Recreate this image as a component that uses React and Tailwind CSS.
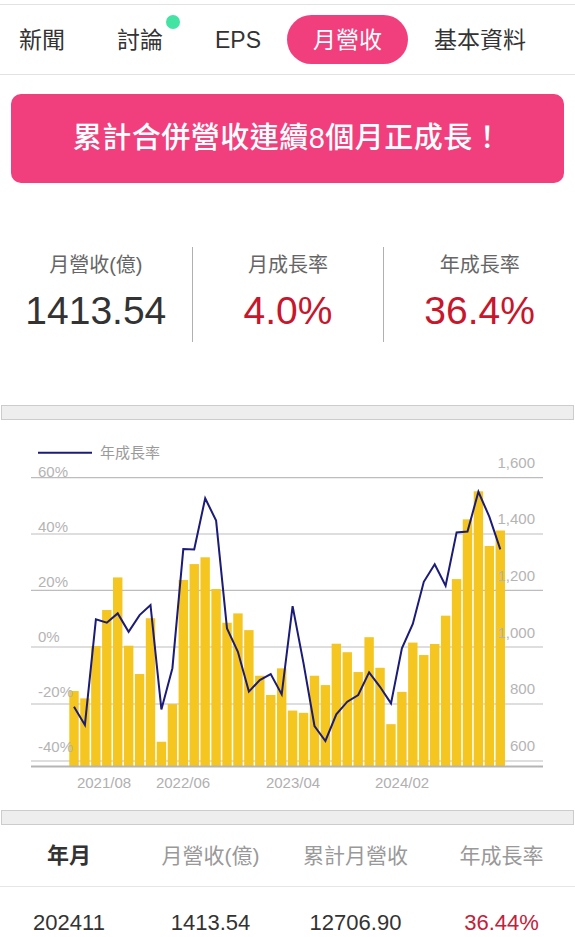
import React from 'react';

const revenue = [
  847, 821, 1006, 1133, 1248, 1007, 907, 1104, 668, 801,
  1239, 1295, 1319, 1207, 1088, 1121, 1062, 901, 833, 927,
  778, 770, 901, 868, 1014, 984, 914, 1037, 929, 730,
  844, 1018, 974, 1013, 1113, 1242, 1453, 1552, 1359, 1413.54,
];

const yoy = [
  -21.2, -27.6, 9.8, 8.6, 11.9, 5.4, 11.3, 14.9, -22.1, -7.5,
  34.7, 34.6, 52.7, 44.8, 6.6, -1.7, -15.8, -11.7, -9.6, -16.8,
  14.5, -5.7, -28.0, -33.3, -23.9, -19.4, -17.0, -9.0, -14.1, -20.0,
  -0.5, 8.2, 23.1, 29.3, 21.7, 40.6, 40.9, 55.0, 46.2, 34.6,
];

const BAR_X0 = 69.3;
const PITCH = 10.93;
const BAR_W = 9.4;
const AXIS_Y = 766.5;

const revY = (v) => 761 - (v - 600) * 0.2833;
const yoyY = (p) => 647 - p * 2.8217;

const gridYs = [477.7, 534, 590.3, 647, 704, 761];
const leftLabels = ['60%', '40%', '20%', '0%', '-20%', '-40%'];
const rightLabels = ['1,600', '1,400', '1,200', '1,000', '800', '600'];
const xLabels = [
  { x: 104, t: '2021/08' },
  { x: 183, t: '2022/06' },
  { x: 293, t: '2023/04' },
  { x: 402, t: '2024/02' },
];

const tabs = ['新聞', '討論', 'EPS', '月營收', '基本資料'];

function RevenueChart() {
  const linePts = yoy
    .map((p, i) => `${(BAR_X0 + i * PITCH + BAR_W / 2).toFixed(1)},${yoyY(p).toFixed(1)}`)
    .join(' ');

  return (
    <svg width="575" height="390" viewBox="0 420 575 390" className="block">
      {/* legend */}
      <line x1="38" y1="452.7" x2="92" y2="452.7" stroke="#1b1b78" strokeWidth="2" />
      <text x="100" y="457.8" fontSize="15" fill="#9a9a9a">年成長率</text>

      {gridYs.map((y) => (
        <line key={y} x1="31" y1={y} x2="543" y2={y} stroke="#bdbdbd" strokeWidth="1.2" />
      ))}

      {revenue.map((v, i) => {
        const top = revY(v);
        return (
          <rect
            key={i}
            x={BAR_X0 + i * PITCH}
            y={top}
            width={BAR_W}
            height={AXIS_Y - top}
            fill="#f5c520"
          />
        );
      })}

      <line x1="31" y1={AXIS_Y} x2="543" y2={AXIS_Y} stroke="#b5b5b5" strokeWidth="2" />

      <polyline points={linePts} fill="none" stroke="#1b1b78" strokeWidth="2" strokeLinejoin="miter" />

      {leftLabels.map((t, i) => (
        <text key={t} x="38" y={477 + i * 55} fontSize="15" fill="#b4b4b4">{t}</text>
      ))}
      {rightLabels.map((t, i) => (
        <text key={t} x="535" y={467.6 + i * 56.7} fontSize="15" fill="#b4b4b4" textAnchor="end">{t}</text>
      ))}
      {xLabels.map((l) => (
        <text key={l.t} x={l.x} y="788" fontSize="15" fill="#b0b0b0" textAnchor="middle">{l.t}</text>
      ))}
    </svg>
  );
}

function ScrollStrip() {
  return <div className="mx-[1px] h-[15px] border border-[#cccccc] bg-[#eeeeee]" />;
}

export default function App() {
  return (
    <div className="w-[575px] min-h-[937px] bg-white overflow-hidden [font-family:'Liberation_Sans','Noto_Sans_CJK_TC',sans-serif]">
      {/* tab bar */}
      <div className="mt-[4px] h-[71px] border-y border-[#e2e2e2] flex items-center">
        <div className="flex items-center -ml-[7px]">
          {tabs.map((t) => (
            <div
              key={t}
              className={
                t === '月營收'
                  ? 'h-[49px] px-[26px] flex items-center rounded-full bg-[#f13f7d] text-white text-[23px]'
                  : 'h-[49px] px-[26px] flex items-center text-[#333333] text-[23px]'
              }
            >
              <span className="relative leading-[30px]">
                {t}
                {t === '討論' && (
                  <span className="absolute -right-[17px] -top-[10px] w-[14px] h-[14px] rounded-full bg-[#42e3a3]" />
                )}
              </span>
            </div>
          ))}
        </div>
      </div>

      {/* banner */}
      <div className="mx-[11px] mt-[19px] h-[89px] rounded-[10px] bg-[#f13f7d] flex items-center justify-center">
        <span className="text-white text-[29px] font-medium tracking-[0.5px]">累計合併營收連續8個月正成長！</span>
      </div>

      {/* stats */}
      <div className="mt-[64px] grid grid-cols-3">
        <div className="h-[95px] flex flex-col items-center">
          <span className="mt-[6px] text-[20px] leading-[24px] text-[#666666]">月營收(億)</span>
          <span className="mt-[12px] text-[39px] leading-[44px] text-[#333333]">1413.54</span>
        </div>
        <div className="h-[95px] flex flex-col items-center border-l border-[#b0b0b0]">
          <span className="mt-[6px] text-[20px] leading-[24px] text-[#666666]">月成長率</span>
          <span className="mt-[12px] text-[39px] leading-[44px] text-[#c8162c]">4.0%</span>
        </div>
        <div className="h-[95px] flex flex-col items-center border-l border-[#b0b0b0]">
          <span className="mt-[6px] text-[20px] leading-[24px] text-[#666666]">年成長率</span>
          <span className="mt-[12px] text-[39px] leading-[44px] text-[#c8162c]">36.4%</span>
        </div>
      </div>

      <div className="mt-[63px]">
        <ScrollStrip />
      </div>

      <RevenueChart />

      <ScrollStrip />

      {/* table */}
      <div className="grid grid-cols-[138px_145px_145px_147px] h-[62px] items-center border-b border-[#e6e6e6] text-[21px]">
        <span className="text-center font-bold text-[#333333] text-[22px]">年月</span>
        <span className="text-center text-[#999999]">月營收(億)</span>
        <span className="text-center text-[#999999]">累計月營收</span>
        <span className="text-center text-[#999999]">年成長率</span>
      </div>
      <div className="grid grid-cols-[138px_145px_145px_147px] h-[70px] items-center text-[22px]">
        <span className="text-center text-[#333333]">202411</span>
        <span className="text-center text-[#333333]">1413.54</span>
        <span className="text-center text-[#333333]">12706.90</span>
        <span className="text-center text-[#c4203a]">36.44%</span>
      </div>
    </div>
  );
}
